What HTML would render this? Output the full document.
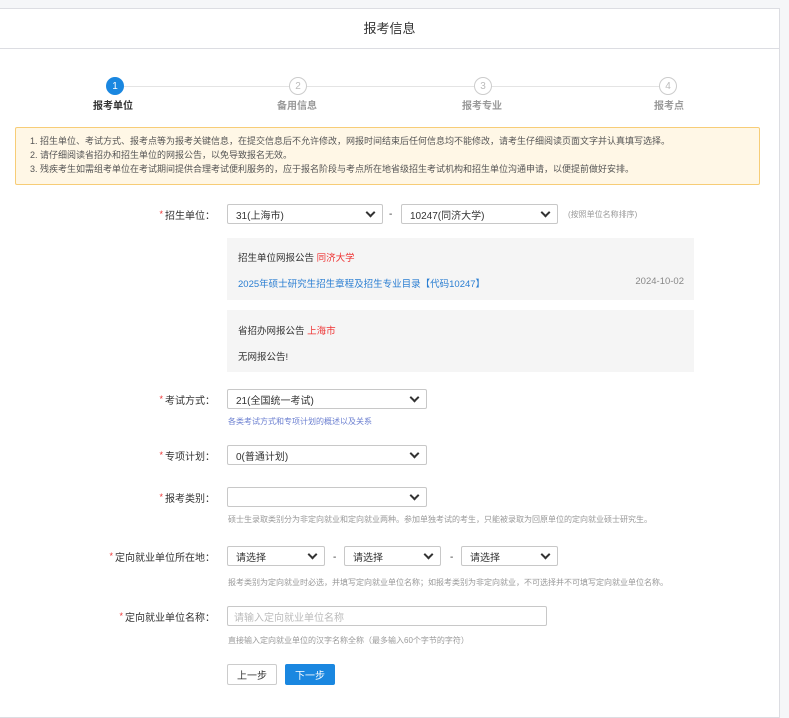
<!DOCTYPE html>
<html><head><meta charset="utf-8"><style>
*{margin:0;padding:0;box-sizing:border-box}
body{width:789px;height:710px;background:#f5f6f8;font-family:"Liberation Sans","Noto Sans CJK SC",sans-serif;position:relative;overflow:hidden;color:#333}
.panel{position:absolute;left:0;top:8px;width:780px;height:710px;background:#fff;border:1px solid #dcdde2;border-left:none}
.a{position:absolute;white-space:nowrap}
.hd{left:0;top:0;width:779px;height:40px;border-bottom:1px solid #dcdde2;text-align:center;line-height:40px;font-size:13px;color:#333}
.line{position:absolute;height:1px;background:#e4e4e4;top:77px}
.c{position:absolute;width:18px;height:18px;border-radius:50%;border:1px solid #ccc;color:#bbb;font-size:10px;display:flex;align-items:center;justify-content:center;top:68px;background:#fff}
.c.on{background:#1a87e0;border-color:#1a87e0;color:#fff}
.sl{position:absolute;font-size:10px;color:#999;top:88px;font-weight:bold}
.note{left:15px;top:118px;width:745px;height:58px;background:#fff7e6;border:1px solid #f7cd77;border-radius:2px;font-size:9px;color:#555;padding:6px 0 0 14px;line-height:14px}
.lb{font-size:10px;color:#333;text-align:right;width:200px;left:15px;height:20px;display:flex;align-items:center;justify-content:flex-end}
.lb b{color:#e33;font-weight:normal;font-size:9px;margin-right:2px}
.sel{position:absolute;height:20px;border:1px solid #c8c8c8;border-radius:2px;background:#fff;font-size:10px;display:flex;align-items:center;padding-left:8px;color:#333}
.sel.d:after{content:"";position:absolute;right:8px;top:4px;width:5px;height:5px;border-right:2px solid #333;border-bottom:2px solid #333;transform:rotate(45deg)}
.hint{font-size:8px;color:#999}
.gb{position:absolute;left:227px;width:467px;background:#f5f5f5;font-size:9.5px}
.dash{font-size:10px;color:#333;height:20px;display:flex;align-items:center}
.btn{position:absolute;height:21px;border:1px solid #ccc;border-radius:2px;font-size:10px;display:flex;align-items:center;justify-content:center;background:#fff}
</style></head><body>
<div class="panel">
<div class="a hd">报考信息</div>
<div class="line" style="left:124px;width:165px"></div>
<div class="line" style="left:307px;width:167px"></div>
<div class="line" style="left:492px;width:167px"></div>
<div class="c on" style="left:106px">1</div>
<div class="c" style="left:289px">2</div>
<div class="c" style="left:474px">3</div>
<div class="c" style="left:659px">4</div>
<div class="sl" style="left:93px;color:#333">报考单位</div>
<div class="sl" style="left:277px">备用信息</div>
<div class="sl" style="left:462px">报考专业</div>
<div class="sl" style="left:654px">报考点</div>
<div class="a note">1. 招生单位、考试方式、报考点等为报考关键信息，在提交信息后不允许修改，网报时间结束后任何信息均不能修改，请考生仔细阅读页面文字并认真填写选择。<br>2. 请仔细阅读省招办和招生单位的网报公告，以免导致报名无效。<br>3. 残疾考生如需组考单位在考试期间提供合理考试便利服务的，应于报名阶段与考点所在地省级招生考试机构和招生单位沟通申请，以便提前做好安排。</div>

<div class="a lb" style="top:195px"><b>*</b>招生单位：</div>
<div class="sel d" style="left:227px;top:195px;width:156px">31(上海市)</div>
<div class="a dash" style="left:389px;top:195px">-</div>
<div class="sel d" style="left:401px;top:195px;width:157px">10247(同济大学)</div>
<div class="a hint" style="left:568px;top:200px">(按照单位名称排序)</div>

<div class="gb" style="top:229px;height:62px">
<div class="a" style="left:11px;top:12px">招生单位网报公告 <span style="color:#e33">同济大学</span></div>
<div class="a" style="left:11px;top:38px;color:#2a7ed2">2025年硕士研究生招生章程及招生专业目录【代码10247】</div>
<div class="a" style="right:10px;top:38px;color:#888">2024-10-02</div>
</div>
<div class="gb" style="top:301px;height:62px">
<div class="a" style="left:11px;top:13px">省招办网报公告 <span style="color:#e33">上海市</span></div>
<div class="a" style="left:11px;top:39px">无网报公告!</div>
</div>

<div class="a lb" style="top:380px"><b>*</b>考试方式：</div>
<div class="sel d" style="left:227px;top:380px;width:200px">21(全国统一考试)</div>
<div class="a hint" style="left:228px;top:407px;color:#6b7fd0">各类考试方式和专项计划的概述以及关系</div>

<div class="a lb" style="top:436px"><b>*</b>专项计划：</div>
<div class="sel d" style="left:227px;top:436px;width:200px">0(普通计划)</div>

<div class="a lb" style="top:478px"><b>*</b>报考类别：</div>
<div class="sel d" style="left:227px;top:478px;width:200px"></div>
<div class="a hint" style="left:228px;top:505px">硕士生录取类别分为非定向就业和定向就业两种。参加单独考试的考生，只能被录取为回原单位的定向就业硕士研究生。</div>

<div class="a lb" style="top:537px"><b>*</b>定向就业单位所在地：</div>
<div class="sel d" style="left:227px;top:537px;width:98px">请选择</div>
<div class="a dash" style="left:333px;top:538px">-</div>
<div class="sel d" style="left:344px;top:537px;width:97px">请选择</div>
<div class="a dash" style="left:450px;top:538px">-</div>
<div class="sel d" style="left:461px;top:537px;width:97px">请选择</div>
<div class="a hint" style="left:228px;top:568px">报考类别为定向就业时必选，并填写定向就业单位名称；如报考类别为非定向就业，不可选择并不可填写定向就业单位名称。</div>

<div class="a lb" style="top:597px"><b>*</b>定向就业单位名称：</div>
<div class="sel" style="left:227px;top:597px;width:320px;color:#bbb;padding-left:6px">请输入定向就业单位名称</div>
<div class="a hint" style="left:228px;top:626px">直接输入定向就业单位的汉字名称全称（最多输入60个字节的字符）</div>

<div class="btn" style="left:227px;top:655px;width:50px">上一步</div>
<div class="btn" style="left:285px;top:655px;width:50px;background:#1a87e0;border-color:#1a87e0;color:#fff">下一步</div>
</div>
</body></html>
